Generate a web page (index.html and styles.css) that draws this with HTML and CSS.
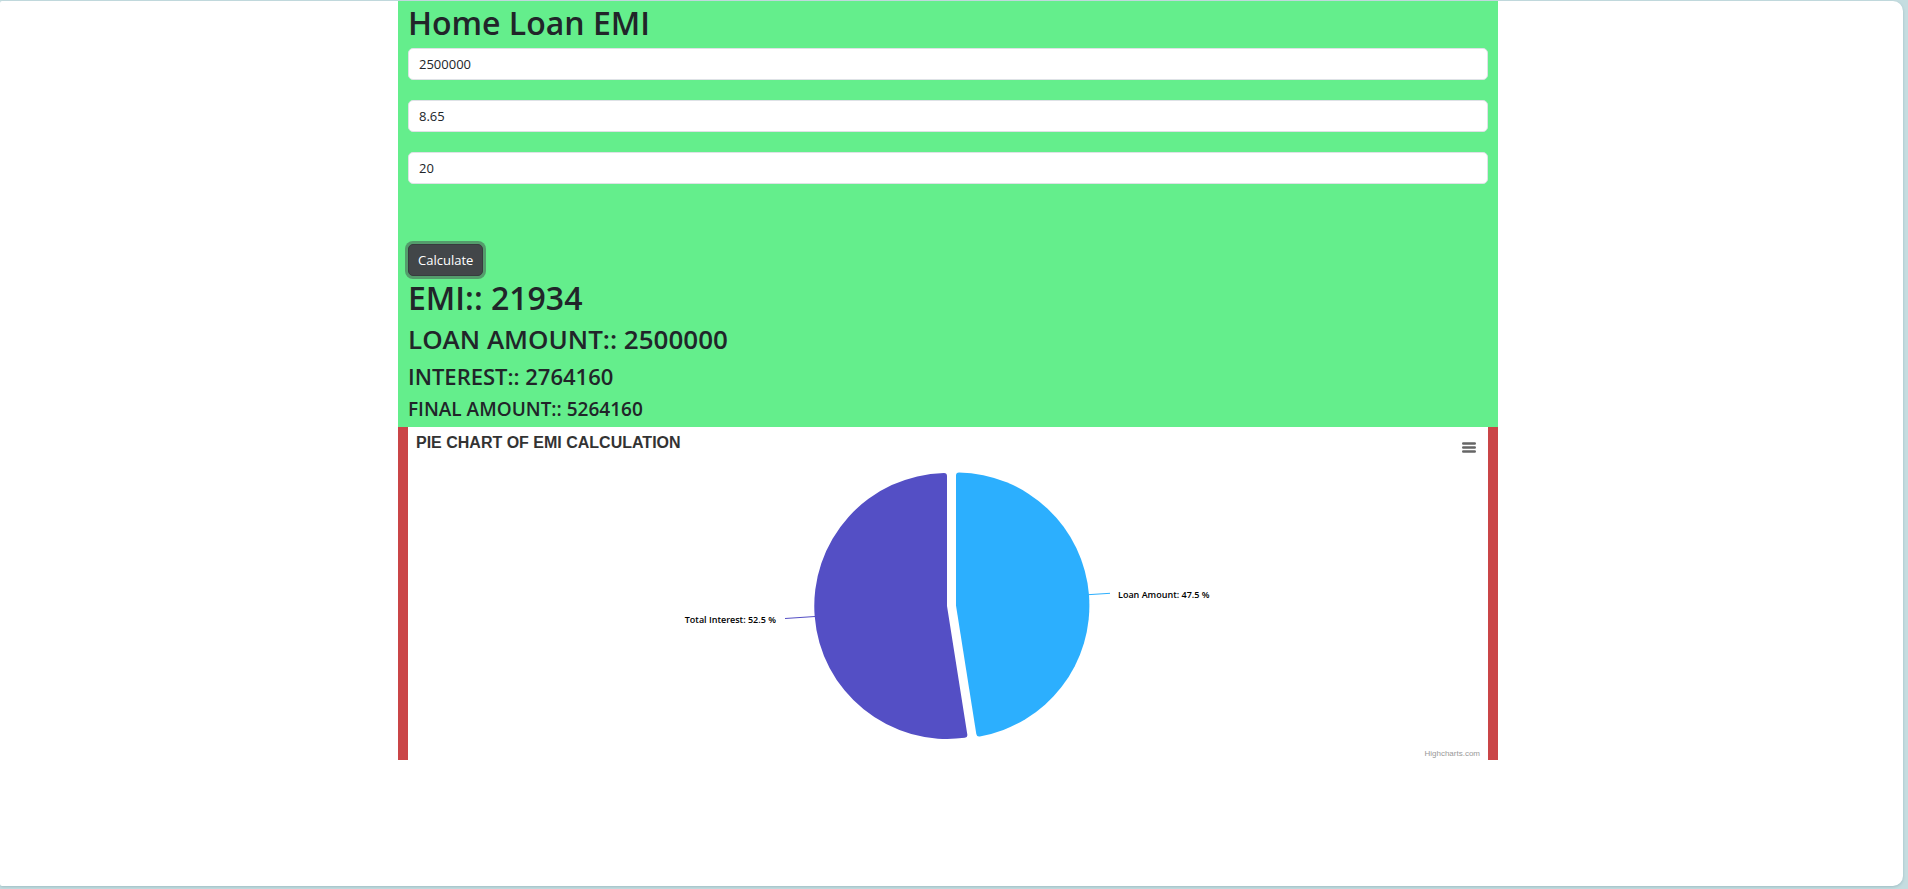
FILE: index.html
```html
<!DOCTYPE html>
<html lang="en">
<head>
<meta charset="utf-8">
<meta name="viewport" content="width=device-width, initial-scale=1">
<title>Home Loan EMI</title>
<link rel="stylesheet" href="styles.css">
</head>
<body>
<main class="page">
  <div class="container">
    <section class="calculator">
      <h1 class="title">Home Loan EMI</h1>
      <form class="form">
        <input class="field" type="text" aria-label="Loan amount" value="2500000">
        <input class="field" type="text" aria-label="Interest rate" value="8.65">
        <input class="field" type="text" aria-label="Years" value="20">
        <button class="button" type="button">Calculate</button>
      </form>
      <p class="result result-emi">EMI:: 21934</p>
      <p class="result result-loan">LOAN AMOUNT:: 2500000</p>
      <p class="result result-interest">INTEREST:: 2764160</p>
      <p class="result result-final">FINAL AMOUNT:: 5264160</p>
    </section>
    <section class="chart-frame">
      <div class="chart">
        <svg class="pie" viewBox="0 0 600 333" role="img" aria-label="Pie chart of EMI calculation">
          <path fill="#544fc5" d="M299 179L319.3 307.4Q319.8 310.4 316.8 310.8A133 133 0 1 1 296 46Q299 46 299 49Z"/>
          <path fill="#2caffe" d="M308 178.5V48.5Q308 45.5 311 45.5A133 133 0 0 1 331.8 309.4Q328.8 309.9 328.3 306.9Z"/>
          <path fill="none" stroke="#544fc5" d="M137 191.5L167 189.5"/>
          <path fill="none" stroke="#2caffe" d="M440 167.7L462 166.3"/>
          <text class="label" x="128" y="196" text-anchor="end">Total Interest: 52.5 %</text>
          <text class="label" x="470" y="171">Loan Amount: 47.5 %</text>
        </svg>
        <h2 class="chart-title">PIE CHART OF EMI CALCULATION</h2>
        <button class="menu" type="button" aria-label="Chart menu">
          <svg width="14" height="11" viewBox="0 0 14 11"><path stroke="#666" stroke-width="2.4" stroke-linecap="round" d="M1.2 1.5H12.8M1.2 5.5H12.8M1.2 9.5H12.8"/></svg>
        </button>
        <a class="credits" href="#">Highcharts.com</a>
      </div>
    </section>
  </div>
</main>
</body>
</html>
```
FILE: styles.css
```css
* { box-sizing: border-box; }

body {
  margin: 0;
  padding: 1px 5px 3px 0;
  min-height: 100vh;
  display: flex;
  background: #c5dde0;
  color: #212529;
  font-family: "Open Sans", "Noto Sans", sans-serif;
}

.page {
  flex: 1;
  padding-right: 7px;
  background: #fff;
  border-radius: 2px 10px 10px 2px;
  box-shadow: 0 1px 3px #9dbdc3;
}

.container {
  width: 100%;
  max-width: 1100px;
  margin: 0 auto;
}

.calculator {
  padding: 0 10px;
  background: #64ee8c;
}

.title,
.result {
  margin: 0 0 6px;
  font-weight: 600;
}

.title { margin-bottom: 4px; font-size: 32px; line-height: 43px; }

.form {
  display: flex;
  flex-direction: column;
  align-items: flex-start;
  gap: 20px;
}

.field {
  width: 100%;
  height: 32px;
  padding: 0 10px;
  border: 1px solid #dee2e6;
  border-radius: 5px;
  background: #fff;
  color: #212529;
  font: 13px "Open Sans", "Noto Sans", sans-serif;
}

.button {
  height: 32px;
  margin-top: 40px;
  padding: 0 9px;
  border: 1px solid #373b3e;
  border-radius: 5px;
  background: #424649;
  color: #fff;
  font: 13px "Open Sans", "Noto Sans", sans-serif;
  box-shadow: 0 0 0 3px #549c6c;
}

.result-emi { margin-bottom: 4px; font-size: 32px; line-height: 44px; }
.result-loan { margin-bottom: 8px; font-size: 26px; line-height: 30px; }
.result-interest { font-size: 22px; line-height: 28px; }
.result-final { margin-bottom: 0; padding-bottom: 5px; font-size: 19px; line-height: 26px; }

.chart-frame {
  padding: 0 10px;
  background: #ca4547;
}

.chart {
  display: grid;
  background: #fff;
  font-family: "Liberation Sans", Arial, sans-serif;
}

.chart > * { grid-area: 1 / 1; }

.pie {
  width: 100%;
  height: 333px;
}

.label {
  font: 600 9px "Open Sans", "Noto Sans", sans-serif;
  fill: #000;
}

.chart-title {
  align-self: start;
  margin: 6px 8px;
  color: #333;
  font-size: 16px;
  line-height: 20px;
}

.menu {
  place-self: start end;
  display: flex;
  margin: 9px 8px;
  padding: 6px 4px;
  border: 0;
  background: none;
}

.credits {
  place-self: end;
  margin: 0 8px 1px;
  color: #999;
  font-size: 8px;
  line-height: 10px;
  text-decoration: none;
}
```
